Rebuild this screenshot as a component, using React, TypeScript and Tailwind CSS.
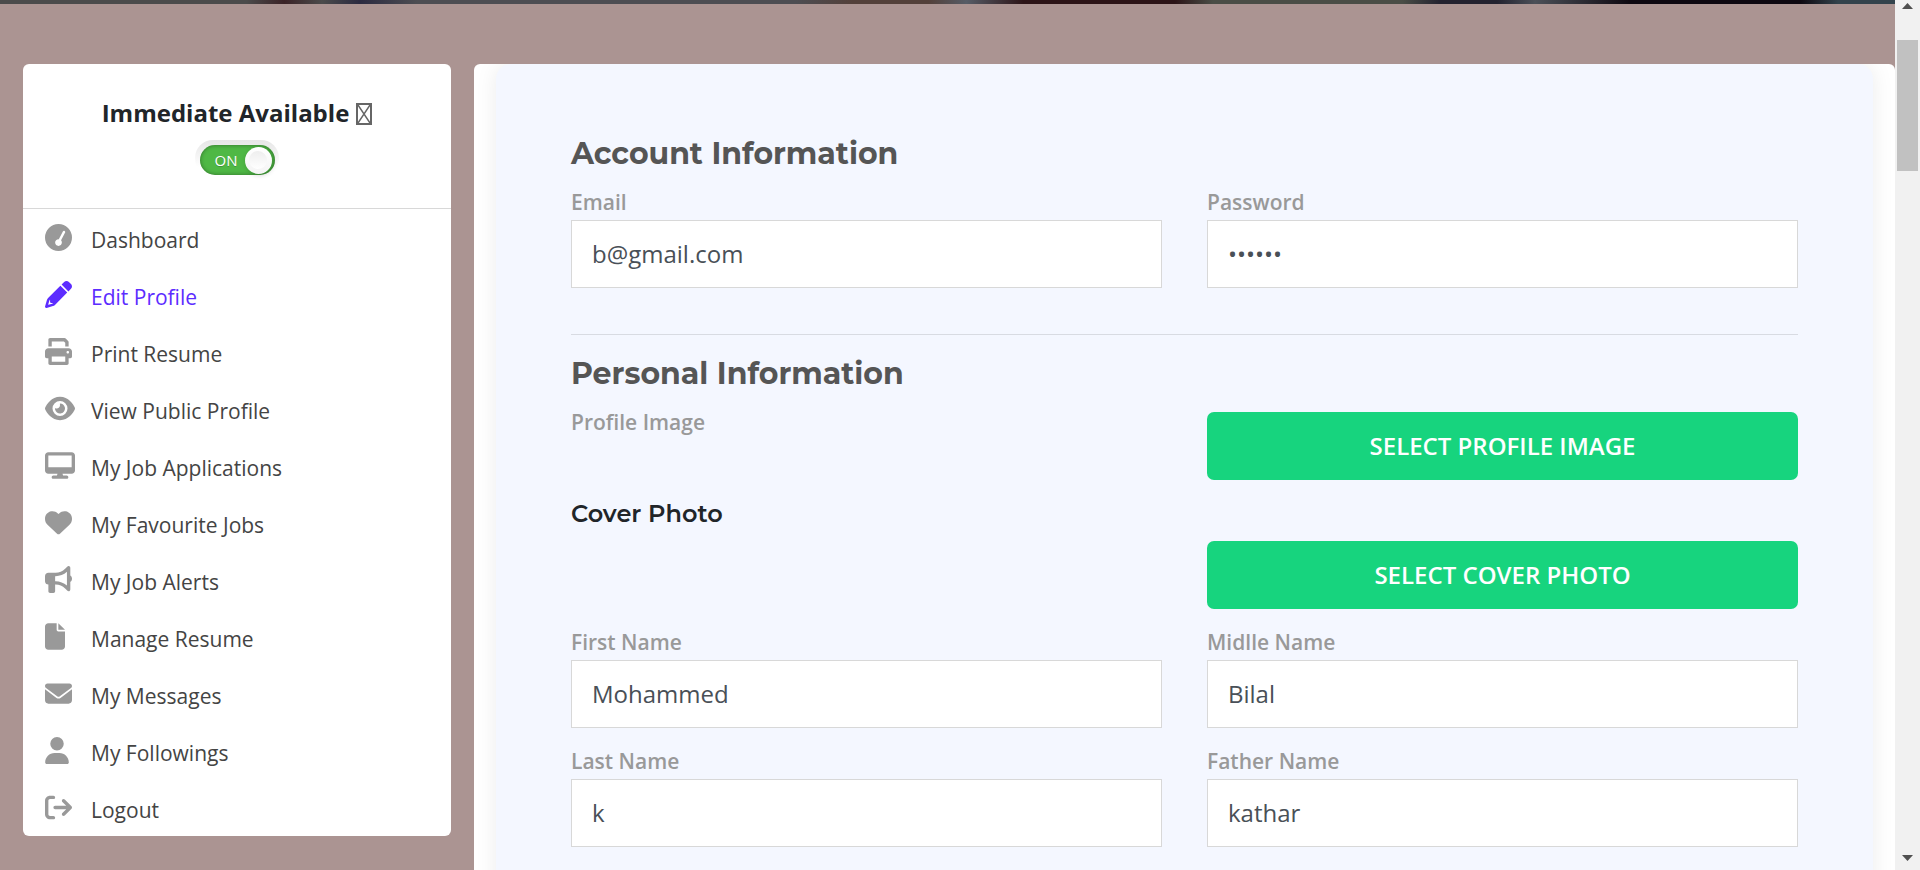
import { useState } from "react";
import type { ReactNode } from "react";
import {
  FaArrowRightFromBracket,
  FaBullhorn,
  FaDesktop,
  FaEnvelope,
  FaEye,
  FaFile,
  FaGaugeSimpleHigh,
  FaHeart,
  FaUser,
} from "react-icons/fa6";

function PencilIcon() {
  return (
    <svg viewBox="0 0 512 512" className="size-[27px]" fill="currentColor" aria-hidden="true">
      <path d="M421.7 220.3L188.5 453.4L154.6 419.5L158.1 416H112C103.2 416 96 408.8 96 400V353.9L92.51 357.4C87.78 362.2 84.31 368 82.42 374.4L59.44 452.6L137.6 429.6C143.1 427.7 149.8 424.2 154.6 419.5L188.5 453.4C178.1 463.8 165.2 471.5 151.1 475.6L30.77 511C22.35 513.5 13.24 511.2 7.03 504.1C.82 498.8-1.5 489.7 .98 481.2L36.37 360.9C40.53 346.8 48.16 333.9 58.57 323.5L291.7 90.34L421.7 220.3zM492.7 58.75C517.7 83.74 517.7 124.3 492.7 149.3L444.3 197.7L314.3 67.72L362.7 19.32C387.7-5.68 428.3-5.68 453.3 19.32L492.7 58.75z" />
    </svg>
  );
}

function PrintIcon() {
  return (
    <svg viewBox="0 0 512 512" className="size-[27px]" fill="currentColor" aria-hidden="true">
      <path d="M448 192H64C28.65 192 0 220.7 0 256v96c0 17.67 14.33 32 32 32h32v96c0 17.67 14.33 32 32 32h320c17.67 0 32-14.33 32-32v-96h32c17.67 0 32-14.33 32-32V256C512 220.7 483.3 192 448 192zM384 448H128v-96h256V448zM432 296c-13.25 0-24-10.75-24-24c0-13.27 10.75-24 24-24c13.25 0 24 10.73 24 24C456 285.3 445.3 296 432 296zM128 64h229.5L384 90.51V160h64V77.25c0-8.48-3.38-16.62-9.38-22.63l-45.25-45.25C387.4 3.37 379.2 0 370.8 0H96C78.34 0 64 14.33 64 32v128h64V64z" />
    </svg>
  );
}

type MenuItem = { label: string; icon: ReactNode; active?: boolean };

const menu: MenuItem[] = [
  { label: "Dashboard", icon: <FaGaugeSimpleHigh className="size-[27px]" /> },
  { label: "Edit Profile", icon: <PencilIcon />, active: true },
  { label: "Print Resume", icon: <PrintIcon /> },
  { label: "View Public Profile", icon: <FaEye className="h-[27px] w-[30px]" /> },
  { label: "My Job Applications", icon: <FaDesktop className="h-[27px] w-[30px]" /> },
  { label: "My Favourite Jobs", icon: <FaHeart className="size-[27px]" /> },
  { label: "My Job Alerts", icon: <FaBullhorn className="size-[27px]" /> },
  { label: "Manage Resume", icon: <FaFile className="h-[27px] w-5" /> },
  { label: "My Messages", icon: <FaEnvelope className="size-[27px]" /> },
  { label: "My Followings", icon: <FaUser className="h-[27px] w-6" /> },
  { label: "Logout", icon: <FaArrowRightFromBracket className="size-[27px]" /> },
];

function AvailabilitySwitch() {
  const [on, setOn] = useState(true);
  return (
    <label className="relative mx-auto flex h-9 w-[84px] cursor-pointer justify-center rounded-full bg-linear-to-b from-[#e6e6e6] to-white to-75% pt-[5px]">
      <input
        type="checkbox"
        aria-label="Immediate Available"
        className="peer sr-only"
        checked={on}
        onChange={(e) => setOn(e.target.checked)}
      />
      <span className="flex h-[30px] w-[75px] shrink-0 items-center justify-end gap-[7px] rounded-full bg-[#e1e1e1] pr-[3px] shadow-[inset_0_0_4px_rgba(0,0,0,0.4)] peer-checked:bg-[#4fb845]">
        <span className="text-[15px] leading-5 text-white [text-shadow:0_1px_rgba(0,0,0,0.2)]">
          {on ? "ON" : "OFF"}
        </span>
        <span className="flex size-[27px] items-center justify-center rounded-full bg-linear-to-b from-white to-[#f4f4f4] shadow-[1px_1px_5px_rgba(0,0,0,0.2)]">
          <span className="size-[18px] rounded-full bg-linear-to-b from-[#eeeeee] to-white" />
        </span>
      </span>
    </label>
  );
}

function Sidebar() {
  return (
    <aside className="w-[428px] shrink-0 self-start rounded-md bg-white">
      <div className="flex h-[145px] flex-col border-b border-[#d8d8d8] pt-8">
        <p className="mb-[10px] flex items-center justify-center gap-[7px] text-[24px] leading-[34px] font-bold text-[#212529]">
          Immediate Available
          <svg viewBox="0 0 16 22" className="mt-[2px] h-[22px] w-4" fill="none" stroke="#666" aria-hidden="true">
            <rect x="1" y="1" width="14" height="20" strokeWidth="2" />
            <path d="M2 2 14 20M14 2 2 20" strokeWidth="1.4" />
          </svg>
        </p>
        <AvailabilitySwitch />
      </div>
      <nav>
        <ul>
          {menu.map(({ label, icon, active }) => (
            <li key={label}>
              <a
                href="#"
                className={
                  active
                    ? "flex h-[57px] items-center pl-[22px] text-[#5c2cff]"
                    : "flex h-[57px] items-center pl-[22px] text-[#444444]"
                }
              >
                <span className={active ? "flex w-[46px] text-[#5c2cff]" : "flex w-[46px] text-[#999999]"}>
                  {icon}
                </span>
                <span className="pt-[5px] text-[21px] leading-8">{label}</span>
              </a>
            </li>
          ))}
        </ul>
      </nav>
    </aside>
  );
}

function Heading({ children }: { children: ReactNode }) {
  return (
    <h2 className="font-['Montserrat','Open_Sans',sans-serif] text-[30px] leading-9 font-bold text-[#555555]">
      {children}
    </h2>
  );
}

function Field({ id, label, value, type = "text" }: { id: string; label: string; value: string; type?: string }) {
  return (
    <div>
      <label htmlFor={id} className="block text-[21px] leading-9 font-semibold text-[#999999]">
        {label}
      </label>
      <input
        id={id}
        type={type}
        defaultValue={value}
        className="block h-[68px] w-full border border-[#d8d8d8] bg-white px-5 pb-[2px] text-[24px] text-[#495057] outline-none"
      />
    </div>
  );
}

function SelectButton({ children }: { children: ReactNode }) {
  return (
    <button
      type="button"
      className="h-[68px] w-full rounded-[7px] bg-[#17d47e] text-[24px] font-semibold text-white uppercase"
    >
      {children}
    </button>
  );
}

function ProfileForm() {
  return (
    <main className="min-w-0 flex-1 self-start overflow-hidden rounded-md bg-white px-[22px]">
      <form className="rounded-[15px] bg-[#f4f7ff] px-[75px] pt-[72px] pb-16 shadow-[0_0_22px_rgba(0,0,0,0.08)]">
        <Heading>Account Information</Heading>
        <div className="mt-3 grid grid-cols-2 gap-[45px]">
          <Field id="email" label="Email" value="b@gmail.com" />
          <Field id="password" label="Password" value="secret" type="password" />
        </div>
        <hr className="mt-[46px] mb-[21px] border-[#d8dbe2]" />
        <Heading>Personal Information</Heading>
        <div className="mt-5 grid grid-cols-2 gap-x-[45px]">
          <p className="text-[21px] leading-5 font-semibold text-[#999999]">Profile Image</p>
          <SelectButton>Select Profile Image</SelectButton>
        </div>
        <h3 className="mt-[19px] mb-3 font-['Montserrat','Open_Sans',sans-serif] text-[24px] leading-[30px] font-semibold text-[#212529]">
          Cover Photo
        </h3>
        <div className="mb-[15px] grid grid-cols-2 gap-x-[45px]">
          <div className="col-start-2">
            <SelectButton>Select Cover Photo</SelectButton>
          </div>
        </div>
        <div className="grid grid-cols-2 gap-x-[45px] gap-y-[15px]">
          <Field id="first-name" label="First Name" value="Mohammed" />
          <Field id="middle-name" label="Midlle Name" value="Bilal" />
          <Field id="last-name" label="Last Name" value="k" />
          <Field id="father-name" label="Father Name" value="kathar" />
        </div>
      </form>
    </main>
  );
}

function ScrollTrack() {
  return (
    <div className="flex w-[25px] shrink-0 flex-col items-center bg-[#f1f1f1]" aria-hidden="true">
      <svg viewBox="0 0 11 6" className="mt-[3px] h-[6px] w-[11px]" fill="#505050">
        <path d="M5.5 0 11 6H0z" />
      </svg>
      <div className="mt-[31px] h-[131px] w-[21px] bg-[#c1c1c1]" />
      <svg viewBox="0 0 11 6" className="mt-auto mb-[9px] h-[6px] w-[11px]" fill="#505050">
        <path d="M0 0h11L5.5 6z" />
      </svg>
    </div>
  );
}

export default function App() {
  return (
    <div className="flex h-screen overflow-hidden bg-[#ab9492] font-['Open_Sans',sans-serif]">
      <div className="min-w-0 flex-1 overflow-hidden">
        <div className="h-1 bg-[linear-gradient(90deg,#4b4b4b_13%,#3a2226_15%,#4b4b4b_17%,#2b2a40_19%,#4d4d52_22%,#4d4d52_42%,#53403a_45%,#53403a_49%,#565c66_51%,#2c1417_54%,#2c1417_62%,#4a4d46_64%,#4a4d46_74%,#23222f_76%,#23222f_79%,#4c5058_81%,#0d0810_86%,#0d0810_95%,#33434c_97%)]" />
        <div className="flex gap-[23px] pt-[60px] pl-[23px]">
          <Sidebar />
          <ProfileForm />
        </div>
      </div>
      <ScrollTrack />
    </div>
  );
}
